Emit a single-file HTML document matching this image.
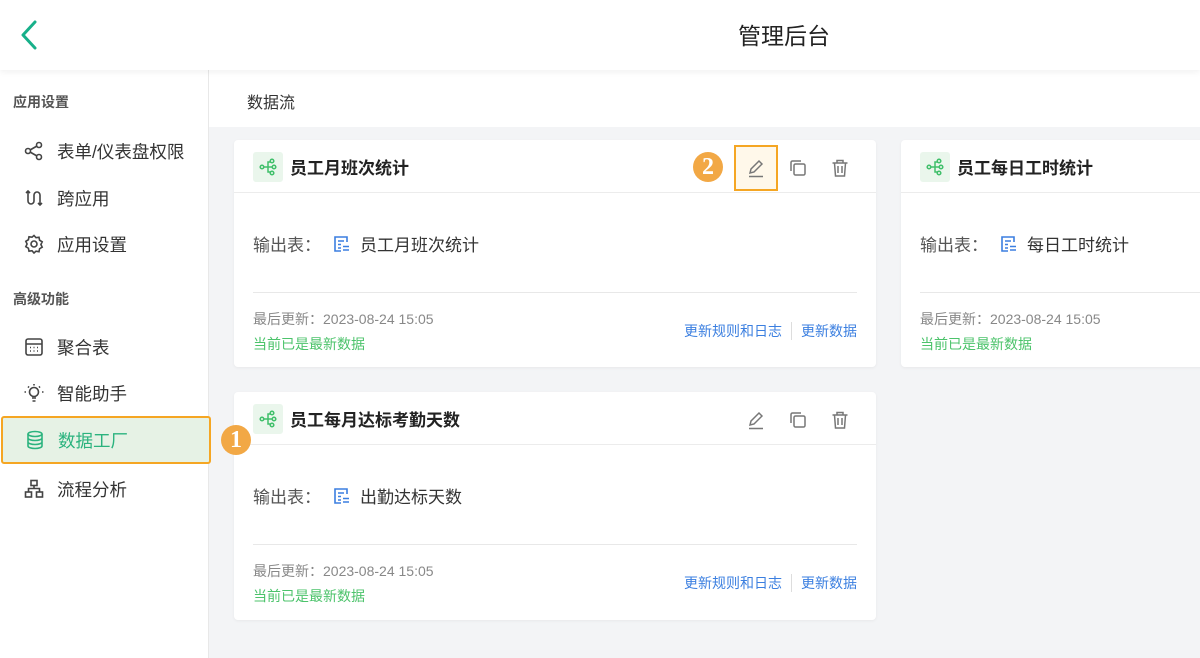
<!DOCTYPE html>
<html><head><meta charset="utf-8">
<style>
*{box-sizing:border-box;margin:0;padding:0}
body{width:1200px;height:658px;overflow:hidden;background:#f3f4f6;font-family:"Liberation Sans","Noto Sans CJK SC",sans-serif;color:#333;position:relative}
.hdr{position:absolute;left:0;top:0;width:1200px;height:70px;background:#fff;box-shadow:0 2px 6px rgba(0,0,0,.06);z-index:2}
.hdr .t{position:absolute;left:738px;top:17px;font-size:23px;color:#222}
.side{position:absolute;left:0;top:70px;width:209px;height:588px;background:#fff;border-right:1px solid #e8e8e8}
.sec{position:absolute;left:13px;font-size:14px;color:#555;font-weight:bold}
.it{position:absolute;left:0;width:209px;height:44px;display:flex;align-items:center;padding-left:24px;font-size:17.5px;color:#333}
.it svg{width:20px;height:20px;margin-right:13px}
.act{left:1px;width:210px;background:#e6f2e5;border:2px solid #f5a623;border-radius:3px;color:#2bb37e;padding-left:22px}
.bar{position:absolute;left:209px;top:70px;width:991px;height:57px;background:#fff}
.bar span{position:absolute;left:38px;top:19px;font-size:16px;color:#333}
.card{position:absolute;background:#fff;border-radius:4px;box-shadow:0 1px 3px rgba(0,0,0,.05)}
.ch{position:absolute;left:0;top:0;right:0;height:53px;border-bottom:1px solid #ececec}
.ico{position:absolute;left:19px;top:12px;width:30px;height:30px;background:#eaf6ec;border-radius:3px}
.ico svg{position:absolute;left:6px;top:6px}
.ttl{position:absolute;left:56px;top:14px;font-size:17px;font-weight:bold;color:#222}
.out{position:absolute;left:19px;top:91px;font-size:17px;color:#555;display:flex;align-items:center}
.out svg{margin:0 9px 0 10px}
.out b{font-weight:normal;color:#333}
.line{position:absolute;left:19px;right:19px;top:152px;border-top:1px solid #e8e8e8}
.lu{position:absolute;left:19px;top:169px;font-size:14px;color:#888}
.ok{position:absolute;left:19px;top:194px;font-size:14px;color:#4cc36b}
.lk{position:absolute;right:19px;top:181px;font-size:14px;color:#3b7fe0;display:flex;align-items:center}
.lk i{display:inline-block;width:1px;height:18px;background:#ddd;margin:0 9px}
.acts{position:absolute;top:10px;right:15px;display:flex}
.acts div{width:42px;height:36px;display:flex;align-items:center;justify-content:center}
.num{position:absolute;width:30px;height:30px;border-radius:50%;background:#f2a845;color:#fff;font-family:"Liberation Serif",serif;font-size:24px;text-align:center;line-height:30px;font-weight:bold}
</style></head><body>
<div class="hdr">
<svg style="position:absolute;left:18px;top:19px" width="22" height="32" viewBox="0 0 22 32"><path d="M17 3L5 16l12 13" fill="none" stroke="#17b08a" stroke-width="3" stroke-linecap="round" stroke-linejoin="round"/></svg>
<div class="t">管理后台</div></div>
<div class="side">
<div class="sec" style="top:22px">应用设置</div>
<div class="it" style="top:59px"><svg viewBox="0 0 20 20" fill="none" stroke="#444" stroke-width="1.6"><circle cx="4" cy="10" r="2.5"/><circle cx="15" cy="4" r="2.5"/><circle cx="15" cy="16" r="2.5"/><path d="M6 9l7-4M6 11l7 4"/></svg>表单/仪表盘权限</div>
<div class="it" style="top:106px"><svg viewBox="0 0 20 20" fill="none" stroke="#444" stroke-width="1.6"><path d="M2 5l2-2 2 2M4 3v10a3 3 0 006 0V7a3 3 0 016 0v10M14 15l2 2 2-2"/></svg>跨应用</div>
<div class="it" style="top:152px"><svg viewBox="0 0 20 20" fill="none" stroke="#444" stroke-width="1.6"><path d="M10 1.5l2 2.2 3-.4.6 2.9 2.6 1.6-1.3 2.7 1.3 2.7-2.6 1.5-.6 3-3-.5L10 19l-2-2.3-3 .5-.6-3-2.6-1.5 1.3-2.7-1.3-2.7 2.6-1.6.6-2.9 3 .4z"/><circle cx="10" cy="10" r="3"/></svg>应用设置</div>
<div class="sec" style="top:219px">高级功能</div>
<div class="it" style="top:255px"><svg viewBox="0 0 20 20" fill="none" stroke="#444" stroke-width="1.6"><rect x="2" y="2" width="16" height="16" rx="2"/><path d="M2 7h16M6 10.5h1M9.5 10.5h1M13 10.5h1M6 14h1M9.5 14h1M13 14h1"/></svg>聚合表</div>
<div class="it" style="top:301px"><svg viewBox="0 0 20 20" fill="none" stroke="#444" stroke-width="1.6"><circle cx="10" cy="9" r="4.5"/><path d="M8 15h4M8.5 18h3M10 1v1.5M2 9H.5M19.5 9H18M4 3.5l1 1M16 3.5l-1 1"/></svg>智能助手</div>
<div class="it act" style="top:346px;height:48px"><svg viewBox="0 0 20 20" fill="none" stroke="#2bb37e" stroke-width="1.6"><ellipse cx="10" cy="4" rx="7" ry="2.5"/><path d="M3 4v12c0 1.4 3.1 2.5 7 2.5s7-1.1 7-2.5V4M3 8c0 1.4 3.1 2.5 7 2.5S17 9.4 17 8M3 12c0 1.4 3.1 2.5 7 2.5s7-1.1 7-2.5"/></svg>数据工厂</div>
<div class="it" style="top:397px"><svg viewBox="0 0 20 20" fill="none" stroke="#444" stroke-width="1.6"><rect x="7" y="1.5" width="6" height="5"/><rect x="1.5" y="13" width="6" height="5"/><rect x="12.5" y="13" width="6" height="5"/><path d="M10 6.5v3M4.5 13V9.5h11V13"/></svg>流程分析</div>
</div>
<div class="bar"><span>数据流</span></div>

<div class="card" style="left:234px;top:140px;width:642px;height:227px">
<div class="ch"><div class="ico"><svg width="18" height="18" viewBox="0 0 18 18" fill="none" stroke="#3fbf6a" stroke-width="1.5"><circle cx="3" cy="9" r="1.8"/><circle cx="13" cy="3" r="1.8"/><circle cx="15" cy="9" r="1.8"/><circle cx="13" cy="15" r="1.8"/><path d="M5 9h8M9 9V4h2.5M9 9v5h2.5"/></svg></div>
<div class="ttl">员工月班次统计</div>
<div class="acts">
<div style="border:2px solid #f5a623;background:#fff8ea;width:44px;height:46px;margin-top:-5px;margin-right:-1px;margin-left:-1px"><svg width="20" height="20" viewBox="0 0 20 20" fill="none" stroke="#777" stroke-width="1.5"><path d="M4 15l1-4 8-8 3 3-8 8zM3 18.5h14"/></svg></div>
<div><svg width="20" height="20" viewBox="0 0 20 20" fill="none" stroke="#777" stroke-width="1.5"><rect x="6" y="6" width="11" height="11" rx="1.5"/><path d="M3 13V4.5A1.5 1.5 0 014.5 3H13"/></svg></div>
<div><svg width="20" height="20" viewBox="0 0 20 20" fill="none" stroke="#777" stroke-width="1.5"><path d="M2.5 5h15M7 5V2.5h6V5M4.5 5l1 13h9l1-13M8 8v7M12 8v7"/></svg></div>
</div></div>
<div class="out">输出表：<svg width="20" height="20" viewBox="0 0 20 20" fill="none" stroke="#3b7fe0" stroke-width="1.6"><path d="M16 8V3H4v14h6M7 7h6M7 10.5h3M7 14h3M12 12.5h6M12 16h6"/></svg><b>员工月班次统计</b></div>
<div class="line"></div>
<div class="lu">最后更新：2023-08-24 15:05</div>
<div class="ok">当前已是最新数据</div>
<div class="lk">更新规则和日志<i></i>更新数据</div>
</div>
<div class="num" style="left:693px;top:152px">2</div>

<div class="card" style="left:901px;top:140px;width:320px;height:227px">
<div class="ch"><div class="ico"><svg width="18" height="18" viewBox="0 0 18 18" fill="none" stroke="#3fbf6a" stroke-width="1.5"><circle cx="3" cy="9" r="1.8"/><circle cx="13" cy="3" r="1.8"/><circle cx="15" cy="9" r="1.8"/><circle cx="13" cy="15" r="1.8"/><path d="M5 9h8M9 9V4h2.5M9 9v5h2.5"/></svg></div>
<div class="ttl">员工每日工时统计</div></div>
<div class="out">输出表：<svg width="20" height="20" viewBox="0 0 20 20" fill="none" stroke="#3b7fe0" stroke-width="1.6"><path d="M16 8V3H4v14h6M7 7h6M7 10.5h3M7 14h3M12 12.5h6M12 16h6"/></svg><b>每日工时统计</b></div>
<div class="line" style="right:0"></div>
<div class="lu">最后更新：2023-08-24 15:05</div>
<div class="ok">当前已是最新数据</div>
</div>

<div class="card" style="left:234px;top:392px;width:642px;height:228px">
<div class="ch"><div class="ico"><svg width="18" height="18" viewBox="0 0 18 18" fill="none" stroke="#3fbf6a" stroke-width="1.5"><circle cx="3" cy="9" r="1.8"/><circle cx="13" cy="3" r="1.8"/><circle cx="15" cy="9" r="1.8"/><circle cx="13" cy="15" r="1.8"/><path d="M5 9h8M9 9V4h2.5M9 9v5h2.5"/></svg></div>
<div class="ttl">员工每月达标考勤天数</div>
<div class="acts">
<div><svg width="20" height="20" viewBox="0 0 20 20" fill="none" stroke="#777" stroke-width="1.5"><path d="M4 15l1-4 8-8 3 3-8 8zM3 18.5h14"/></svg></div>
<div><svg width="20" height="20" viewBox="0 0 20 20" fill="none" stroke="#777" stroke-width="1.5"><rect x="6" y="6" width="11" height="11" rx="1.5"/><path d="M3 13V4.5A1.5 1.5 0 014.5 3H13"/></svg></div>
<div><svg width="20" height="20" viewBox="0 0 20 20" fill="none" stroke="#777" stroke-width="1.5"><path d="M2.5 5h15M7 5V2.5h6V5M4.5 5l1 13h9l1-13M8 8v7M12 8v7"/></svg></div>
</div></div>
<div class="out">输出表：<svg width="20" height="20" viewBox="0 0 20 20" fill="none" stroke="#3b7fe0" stroke-width="1.6"><path d="M16 8V3H4v14h6M7 7h6M7 10.5h3M7 14h3M12 12.5h6M12 16h6"/></svg><b>出勤达标天数</b></div>
<div class="line"></div>
<div class="lu">最后更新：2023-08-24 15:05</div>
<div class="ok">当前已是最新数据</div>
<div class="lk">更新规则和日志<i></i>更新数据</div>
</div>
<div class="num" style="left:221px;top:425px">1</div>
</body></html>
